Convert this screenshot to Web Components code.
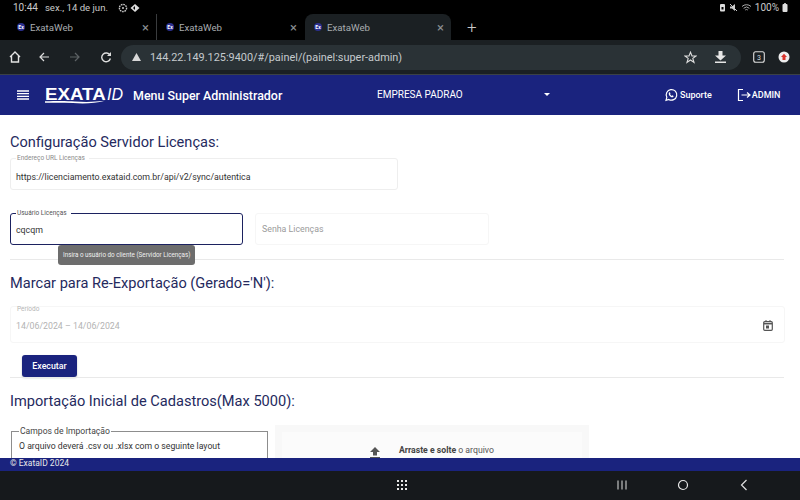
<!DOCTYPE html>
<html lang="pt"><head><meta charset="utf-8"><title>ExataWeb</title>
<style>
html,body{margin:0;height:100%;overflow:hidden}
body{width:800px;height:500px;display:flex;flex-direction:column;font-family:Roboto,"Liberation Sans",sans-serif;background:#fff}
main-content{flex:1;min-height:0}
</style></head><body>
<status-bar></status-bar>
<tab-strip>
  <browser-tab>ExataWeb</browser-tab>
  <browser-tab>ExataWeb</browser-tab>
  <browser-tab active>ExataWeb</browser-tab>
</tab-strip>
<browser-toolbar></browser-toolbar>
<app-header></app-header>
<main-content>
  <section-title style="margin-top:17px">Configuração Servidor Licenças:</section-title>
  <outline-field label="Endereço URL Licenças" value="https://licenciamento.exataid.com.br/api/v2/sync/autentica" style="width:388px;margin-top:3px;--value-pad:8.5px"></outline-field>
  <field-row>
    <outline-field focused label="Usuário Licenças" value="cqcqm" style="width:233px"><field-tip>Insira o usuário do cliente (Servidor Licenças)</field-tip></outline-field>
    <outline-field placeholder="Senha Licenças" style="width:234px"></outline-field>
  </field-row>
  <section-rule style="margin-top:14px"></section-rule>
  <section-title style="margin-top:13px">Marcar para Re-Exportação (Gerado='N'):</section-title>
  <outline-field dim label="Período" value="14/06/2024 – 14/06/2024" calendar style="width:775px;height:37px;margin-top:13px"></outline-field>
  <action-button>Executar</action-button>
  <section-rule></section-rule>
  <section-title style="margin-top:13px">Importação Inicial de Cadastros(Max 5000):</section-title>
  <import-row></import-row>
</main-content>
<app-footer>© ExataID 2024</app-footer>
<system-nav></system-nav>
<script>
const def=(name,html)=>customElements.define(name,class extends HTMLElement{
  connectedCallback(){ if(this.shadowRoot)return; const r=this.attachShadow({mode:'open'}); r.innerHTML=typeof html==='function'?html(this):html; }
});
const ic=(w,h,body,extra='')=>`<svg width="${w}" height="${h}" viewBox="0 0 ${w} ${h}" fill="none" ${extra}>${body}</svg>`;
def('status-bar',`<style>:host{display:flex;align-items:center;height:14px;background:#000;color:#c9c9c9;font:10px Roboto,sans-serif;padding:1px 0 0 13px;box-sizing:border-box}
.date{font-size:9.6px;margin-left:7px}.r{margin-left:auto;display:flex;align-items:center;gap:3px;padding-right:12px}svg{display:block}</style>
<span>10:44</span><span class="date">sex., 14 de jun.</span>
<span style="display:flex;gap:2px;margin-left:10px">${ic(10,10,'<circle cx="5" cy="5" r="3.6" stroke="#ccc" stroke-width="1.4" stroke-dasharray="1.6 .8"/><circle cx="5" cy="5" r="1" fill="#ccc"/>')}${ic(10,10,'<path d="M5 1 9.5 5 5 9 .5 5Z" fill="#ddd"/><path d="M5 3 3 5l2 2Z" fill="#000"/>')}</span>
<span class="r">${ic(7,9,'<rect x="1" y="1" width="5" height="7.5" rx="1" fill="#ddd"/><rect x="2.5" y="4" width="2" height="2.5" fill="#000"/>')}${ic(9,9,'<path d="M1 3.5h2L6 1v7L3 5.5H1Z" fill="#ccc"/><path d="M1 1l7 7" stroke="#ccc"/>')}${ic(11,9,'<path d="M1 3.5a6.5 6.5 0 0 1 9 0M2.6 5.3a4.2 4.2 0 0 1 5.8 0M4.2 7a2 2 0 0 1 2.6 0" stroke="#aaa"/>')}<span>100%</span>${ic(6,9,'<rect x="0.5" y="1" width="5" height="8" rx="1" fill="#ddd"/><rect x="2" y=".2" width="2" height="1" fill="#ddd"/>')}</span>`);
def('tab-strip',`<style>:host{display:flex;height:26px;background:#000;padding-left:8px;box-sizing:border-box;align-items:stretch}
.plus{color:#c8c8c8;font:300 17px Roboto,sans-serif;margin-left:16px;align-self:center;line-height:1}
::slotted(browser-tab:nth-of-type(2)){border-left:1px solid #3a3c3e}</style><slot></slot><span class="plus">+</span>`);
def('browser-tab',t=>`<style>:host{display:flex;align-items:center;width:148px;box-sizing:border-box;padding:0 7px 0 9px;color:#a9adb0;font:9.7px Roboto,sans-serif;${t.hasAttribute('active')?'background:#1b2023;border-radius:8px 8px 0 0;width:146px;margin-left:1px;':''}}
.fav{width:8px;height:8px;border-radius:50%;background:#2b2f8f;color:#fff;font:bold 5px/8px Roboto,sans-serif;text-align:center;margin-right:5px}
.x{margin-left:auto;color:#8b8f92;font-size:13px;line-height:1}</style><span class="fav">Ex</span><slot></slot><span class="x">×</span>`);
def('browser-toolbar',`<style>:host{display:flex;align-items:center;height:35px;background:#1b2023;box-sizing:border-box;border-bottom:1px solid #3b4145;color:#e0e0e0;padding-left:8px}
svg{display:block;flex:none}.u{margin-left:9px;flex:none;width:620px;height:25px;border-radius:13px;background:#2a3236;display:flex;align-items:center;padding-left:11px;box-sizing:border-box;font:10.9px Roboto,sans-serif;color:#aeb4b8}
.u b{font-weight:400;color:#c5cacd;margin-left:9px}.e{margin-left:auto;display:flex;gap:18px;align-items:center;padding-right:15px}</style>
${ic(14,14,'<path d="M2 7 7 2l5 5M3.5 6v6h7V6" stroke="#e4e4e4" stroke-width="1.4"/>')}
<span style="width:16px"></span>${ic(12,12,'<path d="M11 6H2M6 2 2 6l4 4" stroke="#ddd" stroke-width="1.2"/>')}
<span style="width:19px"></span>${ic(12,12,'<path d="M1 6h9M6 2l4 4-4 4" stroke="#5d6265" stroke-width="1.2"/>')}
<span style="width:19px"></span>${ic(12,12,'<path d="M10 4.2A4.4 4.4 0 1 0 10.4 7.5" stroke="#ddd" stroke-width="1.4"/><path d="M11 1v4H7Z" fill="#ddd"/>')}
<div class="u">${ic(9,8,'<path d="M4.5 0 9 8H0Z" fill="#d8d8d8"/>')}<b>144.22.149.125:9400/#/painel/(painel:super-admin)</b>
<span class="e">${ic(13,13,'<path d="M6.5 1.2 8 5h4L8.8 7.4 10 11.5 6.5 9 3 11.5 4.2 7.4 1 5h4Z" stroke="#ddd" stroke-width="1.1"/>')}${ic(11,12,'<path d="M3.5 0h4v4.5H11L5.5 9.5 0 4.5h3.5ZM0 10.5h11V12H0Z" fill="#e6e6e6"/>')}</span></div>
<span style="width:12px"></span>${ic(12,12,'<rect x=".7" y=".7" width="10.6" height="10.6" rx="2" stroke="#ddd" stroke-width="1.1"/><text x="6" y="8.6" text-anchor="middle" font-size="7" font-family="Roboto" fill="#ddd">3</text>')}
<span style="width:13px"></span>${ic(12,12,'<circle cx="6" cy="6" r="5.5" fill="#eee"/><path d="M6 2.8 9 6H7.5v3h-3V6H3Z" fill="#d8342c"/>')}`);
def('app-header',`<style>:host{display:flex;align-items:center;height:40px;background:#1a237e;color:#fff;box-sizing:border-box;padding-left:17px;font-family:Roboto,sans-serif}
svg{display:block;flex:none}.logo{margin-left:16px;font:italic 400 16px/16px "Liberation Sans",sans-serif;width:78px;height:16px;flex:none;position:relative;display:flex}
.logo b{display:block;width:62px;font:700 15.6px/16px "Liberation Sans",sans-serif;transform:scaleX(1.2);transform-origin:0 50%;flex:none}
.logo svg{position:absolute;left:0;top:13px}
.m{margin-left:10px;font-size:12.45px;font-weight:500;flex:none;width:244px}
.e{font-size:10px;width:167px;flex:none;margin-bottom:2px}.c{width:0;height:0;border:3px solid transparent;border-top-color:#fff;border-bottom:0;flex:none;margin-bottom:2px}
.s{margin-left:114px;display:flex;align-items:center;gap:2px;font-size:9px;font-weight:500;flex:none;margin-bottom:1px}.a{margin-left:25px;display:flex;align-items:center;gap:1px;font-size:9px;font-weight:500;flex:none;margin-bottom:1px}</style>
${ic(12,10,'<path d="M0 1h12M0 3.7h12M0 6.3h12M0 9h12" stroke="#fff" stroke-width="1.3"/>')}
<div class="logo"><b>EXATA</b>ID${ic(60,4,'<path d="M0 1.2C14 .8 22 .8 30 1.5 40 2.2 50 2 60 .8 50 3.500 38 3.800 28 3 18 2.500 8 2.600 0 2.800Z" fill="#fff"/>')}</div>
<span class="m">Menu Super Administrador</span><span class="e">EMPRESA PADRAO</span><span class="c"></span>
<span class="s">${ic(14,14,'<path d="M2 12.3 2.800 9.300A5.300 5.300 0 1 1 4.800 11.400Z" stroke="#fff" stroke-width="1.2"/><path d="M5 4.700c-.8 1 .2 2.800 1.300 3.700 1.200 1 2.500 1.300 3 .5l.3-.8-1.400-.8-.6.600C6.900 7.500 6.300 6.800 6 6l.5-.600-.7-1.300Z" fill="#fff"/>')}Suporte</span>
<span class="a">${ic(14,14,'<path d="M6 1.5H1.5v11H6" stroke="#fff" stroke-width="1.2"/><path d="M4.5 7h8.5M10 4.5 13 7l-3 2.5" stroke="#fff" stroke-width="1.2"/>')}ADMIN</span>`);
def('main-content',`<style>:host{display:block;overflow:hidden;background:#fff;padding:0 16px 0 10px;min-height:0}</style><slot></slot>`);
def('section-title',`<style>:host{display:block;font:400 14.6px/20px Roboto,sans-serif;color:#252a5e}</style><slot></slot>`);
def('section-rule',`<style>:host{display:block;height:1px;background:#e9e9e9}</style>`);
def('field-row',`<style>:host{display:flex;gap:12px;margin-top:20px}</style><slot></slot>`);
def('outline-field',t=>{
  const f=t.hasAttribute('focused'),d=t.hasAttribute('dim');
  const l=t.getAttribute('label'),v=t.getAttribute('value'),p=t.getAttribute('placeholder');
  return `<style>:host{display:block;height:35px;position:relative;box-sizing:border-box}
fieldset{margin:0;padding:0 5px;height:100%;box-sizing:border-box;border:${f?'1.6px solid #1c2260':'1px solid '+(d||p?'#f6f6f6':'#eeeeee')};border-radius:3px;display:block;min-width:0}
fieldset.nl{margin-top:3px;height:calc(100% - 3px);padding:0 6px}
fieldset.in{margin-top:0;height:100%;padding:0 5px}
legend{font:6.5px/7px Roboto,sans-serif;color:${f?'#555':'#8a8a8a'};padding:0 4px 0 1px;margin-left:0;height:7px}
.lab{font:6.5px/7px Roboto,sans-serif;color:#b5b5b5;margin:-1px 0 0 1px}
.v{font:8.8px/12px Roboto,sans-serif;color:${d?'#b3b3b3':'#333'};white-space:nowrap;padding:var(--value-pad,7px) 0 0 0}
.in .v{padding-top:7px}
.p{color:#9b9b9b;padding-top:9px}.cal{position:absolute;right:12px;top:10px}</style>
${d?`<fieldset class="in"><div class="lab">${l}</div><div class="v">${v}</div></fieldset>`:
`<fieldset class="${l?'':'nl'}">${l?`<legend>${l}</legend>`:''}<div class="v ${p?'p':''}">${v||p||''}</div></fieldset>`}
${t.hasAttribute('calendar')?`<span class="cal">${ic(10,11,'<rect x=".7" y="1.7" width="8.6" height="8.6" rx="1" stroke="#555" stroke-width="1.2"/><path d="M1 3.7h8" stroke="#555" stroke-width="1.5"/><path d="M3 0v2M7 0v2" stroke="#555"/><rect x="3" y="5.5" width="3" height="3" fill="#555"/>')}</span>`:''}<slot></slot>`;
});
def('field-tip',`<style>:host{position:absolute;left:48px;top:35px;z-index:2;background:#6d6d6d;color:#f0f0f0;font:6.3px/20px Roboto,sans-serif;white-space:nowrap;padding:0 5px;height:20px;border-radius:3px}</style><slot></slot>`);
def('action-button',`<style>:host{display:block;width:55px;height:22px;margin:12px 0 0 12px;background:#1a237e;color:#fff;border-radius:3px;font:500 8.8px/22px Roboto,sans-serif;text-align:center;box-shadow:0 1px 2px rgba(0,0,0,.25)}</style><slot></slot>`);
def('import-row',`<style>:host{display:flex;margin-top:14px;height:40px;overflow:visible;align-items:flex-start}
fieldset{margin:1px 0 0 1px;padding:0 7px;width:257px;box-sizing:border-box;height:60px;border:1px solid #8d8d8d;flex:none;min-width:0}
legend{font:8.6px/10px Roboto,sans-serif;color:#444;padding:0 1px}p{margin:4px 0 0;font:8.7px/12px Roboto,sans-serif;color:#333;white-space:nowrap}
.d{margin-left:7px;width:314px;height:60px;background:#fbfbfb;border:7px solid #f8f8f8;border-bottom:0;box-sizing:border-box;flex:none;display:flex;padding:12px 0 0 88px;align-items:flex-start;color:#555;font:8.7px/12px Roboto,sans-serif}
.d b{color:#444;font-weight:700}svg{display:block;margin-right:19px;margin-top:3px}</style>
<fieldset><legend>Campos de Importação</legend><p>O arquivo deverá .csv ou .xlsx com o seguinte layout</p></fieldset>
<div class="d">${ic(10,12,'<path d="M5 0 10 5H7v3.5H3V5H0ZM0 10h10v1.5H0Z" fill="#555"/>')}<span><b>Arraste e solte</b> o arquivo</span></div>`);
def('app-footer',`<style>:host{display:block;height:13px;background:#1a237e;color:#e8e8e8;font:8.5px/11px Roboto,sans-serif;padding-left:10px;position:relative;z-index:2}</style><slot></slot>`);
def('system-nav',`<style>:host{display:block;position:relative;height:29px;background:#16191c;z-index:2}svg{position:absolute;top:8px}</style>
<svg style="left:396px" width="12" height="12" viewBox="0 0 12 12">${[1,5,9].flatMap(y=>[1,5,9].map(x=>`<rect x="${x}" y="${y}" width="2" height="2" fill="#e8e8e8"/>`)).join('')}</svg>
<svg style="left:616px" width="12" height="12" viewBox="0 0 12 12"><path d="M2 1.5v9M6 1.5v9M10 1.5v9" stroke="#cfcfcf" stroke-width="1.1"/></svg>
<svg style="left:677px" width="12" height="12" viewBox="0 0 12 12"><circle cx="6" cy="6" r="4.5" stroke="#e8e8e8" stroke-width="1.2" fill="none"/></svg>
<svg style="left:738px" width="12" height="12" viewBox="0 0 12 12"><path d="M8.5 1 3.5 6l5 5" stroke="#e0e0e0" stroke-width="1.2" fill="none"/></svg>`);
</script>
</body></html>
